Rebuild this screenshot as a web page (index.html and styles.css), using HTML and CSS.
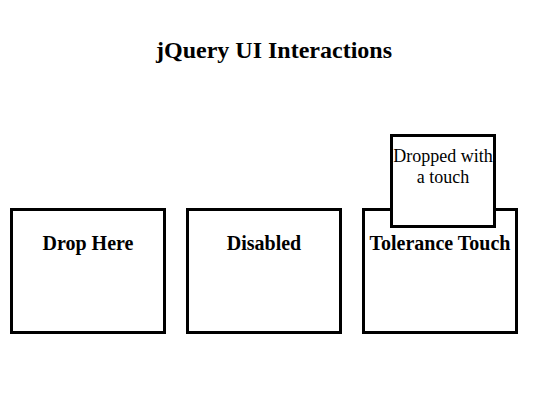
FILE: index.html
```html
<!DOCTYPE html>
<html lang="en">
<head>
    <meta charset="UTF-8">
    <title>jQuery UI Interactions</title>
    <link rel="stylesheet" href="styles.css">
</head>
<body>
    <h1 class="title">jQuery UI Interactions</h1>
    <div class="drop-row">
        <div class="droppable"><div class="label">Drop Here</div></div>
        <div class="droppable"><div class="label">Disabled</div></div>
        <div class="droppable"><div class="label">Tolerance Touch</div></div>
    </div>
    <div class="draggable">Dropped with a touch</div>
</body>
</html>
```

FILE: styles.css
```css
body {
    font-family: "Liberation Serif", "Times New Roman", serif;
    color: #000;
    background: #fff;
    margin: 0;
    position: relative;
}
.title {
    font-size: 24px;
    line-height: 28px;
    font-weight: bold;
    text-align: center;
    margin: 36px 0 0;
    padding-left: 4px;
}
.drop-row {
    display: flex;
    padding-top: 134px;
}
.droppable {
    width: 150px;
    height: 120px;
    border: 3px solid #000;
    margin: 10px;
    text-align: center;
}
.label {
    font-size: 20px;
    font-weight: bold;
    margin-top: 21px;
}
.draggable {
    position: absolute;
    left: 390px;
    top: 134px;
    width: 100px;
    height: 79px;
    padding-top: 9px;
    border: 3px solid #000;
    background: #fff;
    font-size: 18px;
    text-align: center;
}
```
